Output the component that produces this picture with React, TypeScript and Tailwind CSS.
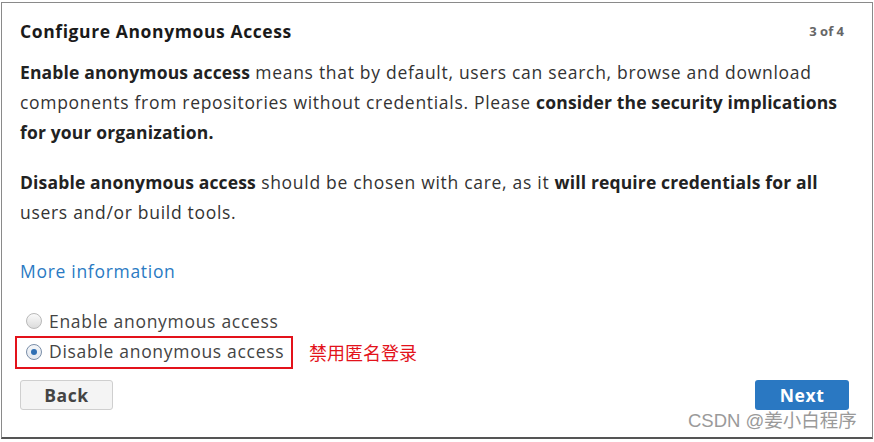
import React from "react";

const font = { fontFamily: "'Open Sans', Lato, Arial, sans-serif" };

function Radio({ checked }: { checked?: boolean }) {
  return (
    <span
      className={
        "inline-flex items-center justify-center w-[16px] h-[16px] rounded-full border shrink-0 " +
        (checked
          ? "border-[#7a8ea8] bg-gradient-to-b from-[#f4f6f9] to-[#e3e8ef]"
          : "border-[#b9b9b9] bg-gradient-to-b from-[#fafafa] to-[#dcdcdc]")
      }
    >
      {checked && <span className="w-[6px] h-[6px] rounded-full bg-[#2f6fb3]" />}
    </span>
  );
}

function B({ children }: { children: React.ReactNode }) {
  return <b className="text-[#222] tracking-[0.15px]">{children}</b>;
}

export default function App() {
  return (
    <div className="w-[874px] h-[442px] bg-white relative overflow-hidden" style={font}>
      <div className="ml-[1px] mt-[2px] w-[872px] h-[437px] border border-[#8a8a8a] border-b-2 border-b-[#555] bg-white pl-[18px] pr-[23px] text-[#333] text-[17.5px] tracking-[0.7px]">
        <div className="flex items-center justify-between pt-[16px] h-[40px]">
          <div className="font-bold text-[#1a1a1a] leading-[24px] tracking-[0.6px]">Configure Anonymous Access</div>
          <div className="text-[13px] tracking-normal font-bold text-[#666] leading-[24px] mr-[5px]">3 of 4</div>
        </div>
        <p className="mt-[14px] leading-[30px] whitespace-nowrap">
          <B>Enable anonymous access</B> means that by default, users can search, browse and download
          <br />
          components from repositories without credentials. Please{" "}
          <B>consider the security implications</B>
          <br />
          <B>for your organization.</B>
        </p>
        <p className="mt-[20px] leading-[30px] whitespace-nowrap">
          <B>Disable anonymous access</B> should be chosen with care, as it{" "}
          <B>will require credentials for all</B>
          <br />
          users and/or build tools.
        </p>
        <div className="mt-[29px] leading-[30px] text-[#2a7ac3]">More information</div>
        <div className="mt-[20px] flex flex-col">
          <label className="flex items-center gap-[7px] h-[30px] pl-[6px] text-[#444]">
            <Radio />
            <span>Enable anonymous access</span>
          </label>
          <div className="flex items-center">
            <label className="ml-[-5px] flex items-center gap-[7px] h-[33px] pl-[9px] pb-[2px] border-2 border-[#e3121b] text-[#444] w-[278px] whitespace-nowrap">
              <Radio checked />
              <span>Disable anonymous access</span>
            </label>
            <span
              className="ml-[16px] text-[18px] tracking-normal text-[#e3121b]"
              style={{ fontFamily: "'Noto Sans CJK SC', sans-serif" }}
            >
              禁用匿名登录
            </span>
          </div>
        </div>
        <div className="mt-[11px] flex items-center justify-between">
          <button className="w-[93px] h-[30px] rounded-[3px] border border-[#cfcfcf] bg-[#f4f4f4] font-bold text-[#444] tracking-[0.6px]">
            Back
          </button>
          <button className="w-[94px] h-[30px] rounded-[3px] bg-[#2a78c2] font-bold text-white tracking-[0.6px]">
            Next
          </button>
        </div>
      </div>
      <div
        className="absolute left-[688px] top-[409px] text-[18.5px] text-[#9a9a9a] leading-[24px]"
        style={{ fontFamily: "'Liberation Sans', 'Noto Sans CJK SC', sans-serif" }}
      >
        CSDN @姜小白程序
      </div>
    </div>
  );
}
